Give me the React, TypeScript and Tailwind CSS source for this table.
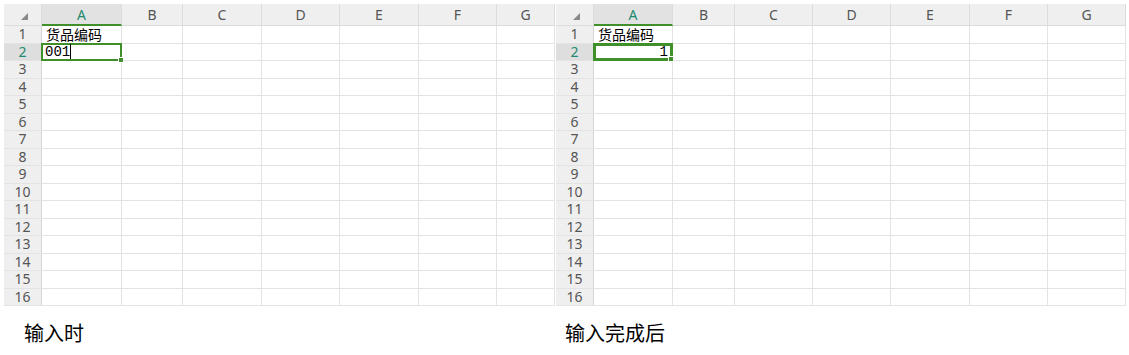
import React from 'react';

const COLS = ['A', 'B', 'C', 'D', 'E', 'F', 'G'];
const ROWS = Array.from({ length: 16 }, (_, i) => i + 1);

interface SheetProps {
  widths: number[];
  value: string;
  editing?: boolean;
}

const Sheet = ({ widths, value, editing }: SheetProps) => {
  return (
    <div className="flex flex-col font-['Noto_Sans','Noto_Sans_CJK_SC',sans-serif] text-[14px]">
      {/* column header */}
      <div className="flex h-[22px] bg-[#efefef] border-b border-[#dcdcdc]">
        <div className="w-[38px] shrink-0 flex items-center justify-center border-r border-[#dcdcdc]">
          <svg width="7" height="7" viewBox="0 0 7 7" className="mt-[3px] ml-[3px]">
            <path d="M7 0 L7 7 L0 7 Z" fill="#8a8a8a" />
          </svg>
        </div>
        {COLS.map((c, i) => (
          <div
            key={c}
            style={{ width: widths[i] }}
            className={
              'shrink-0 flex items-center justify-center border-r border-[#dcdcdc] ' +
              (i === 0 ? 'bg-[#e2e2e2] text-[#1f8a70] border-b-2 border-b-[#3f8f2a] -mb-px' : 'text-[#555]')
            }
          >
            {c}
          </div>
        ))}
      </div>
      {/* rows */}
      {ROWS.map((r) => (
        <div key={r} className="flex h-[17.5px] border-b border-[#e3e3e3]">
          <div
            className={
              'w-[38px] shrink-0 flex items-center justify-center border-r border-[#d6d6d6] leading-none ' +
              (r === 2 ? 'bg-[#dedede] text-[#1f8a70]' : 'bg-[#efefef] text-[#555]')
            }
          >
            {r}
          </div>
          {COLS.map((c, i) => (
            <div
              key={c}
              style={{ width: widths[i] }}
              className="shrink-0 relative border-r border-[#e3e3e3] flex items-center"
            >
              {r === 1 && i === 0 && (
                <span className="pl-[4px] text-black text-[14px] leading-none font-['Noto_Sans_CJK_SC',sans-serif]">货品编码</span>
              )}
              {r === 2 && i === 0 && (
                <div
                  className={
                    'absolute -left-px -top-px right-[-1px] bottom-[-1px] border-[#3f8f2a] flex items-center z-10 ' +
                    (editing ? 'border-2 justify-start' : 'border-[3px] justify-end')
                  }
                >
                  <span className="px-[2px] text-black text-[14px] leading-none font-['Liberation_Mono',monospace]">
                    {value}
                  </span>
                  {editing && <span className="-ml-[2px] w-px h-[15px] bg-black" />}
                  <span className="absolute right-[-4px] bottom-[-4px] w-[6px] h-[6px] bg-[#3f8f2a] border border-white" />
                </div>
              )}
            </div>
          ))}
        </div>
      ))}
    </div>
  );
};

export default function App() {
  return (
    <div className="w-[1129px] h-[355px] bg-white flex flex-col pt-[4px] pl-[4px]">
      <div className="flex gap-px">
        <Sheet widths={[80, 61, 79, 78, 79, 78, 58]} value="001" editing />
        <Sheet widths={[79, 62, 78, 78, 79, 78, 78]} value="1" />
      </div>
      <div className="flex mt-[15px] text-[20px] leading-[24px] text-black font-['Noto_Sans_CJK_SC',sans-serif]">
        <span className="w-[543px] pl-[20px]">输入时</span>
        <span className="pl-[18px]">输入完成后</span>
      </div>
    </div>
  );
}
